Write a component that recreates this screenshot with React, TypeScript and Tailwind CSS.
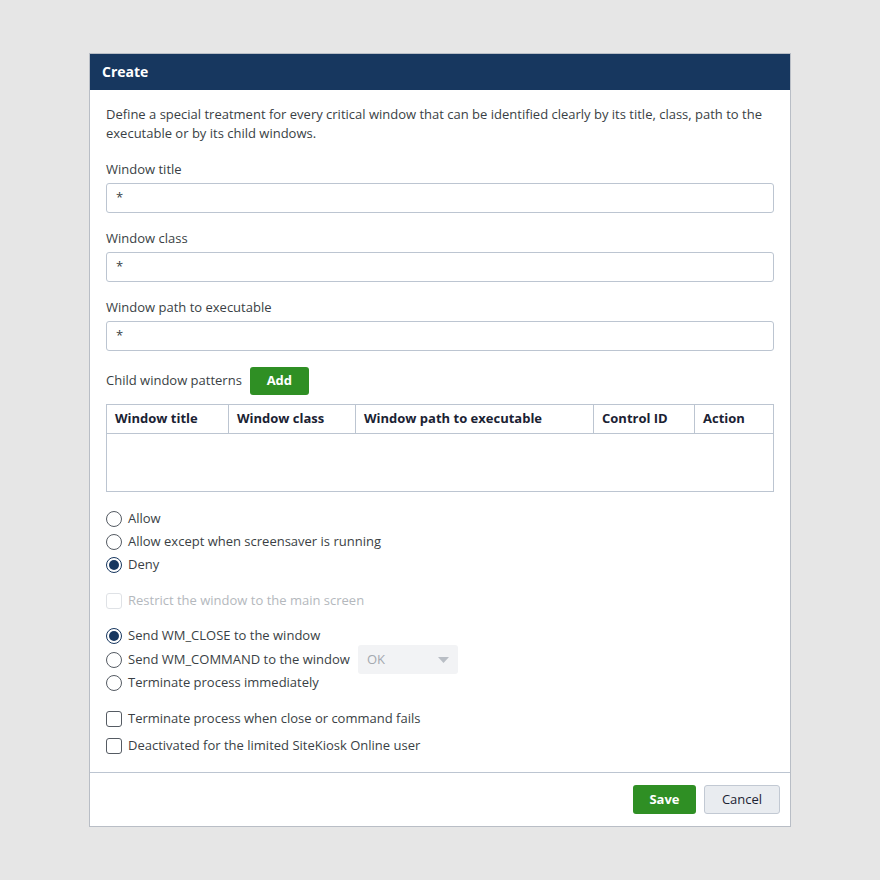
import React from "react"

type Opt = { label: string; checked?: boolean }

const Radio = ({ label, checked }: Opt) => (
  <label className="flex items-center h-[23px] gap-[6px]">
    <span
      className={
        "w-[16px] h-[16px] rounded-full border bg-white flex items-center justify-center " +
        (checked ? "border-[#17375f]" : "border-[#555b63]")
      }
    >
      {checked && <span className="w-[10px] h-[10px] rounded-full bg-[#17375f]" />}
    </span>
    <span>{label}</span>
  </label>
)

const Check = ({ label, disabled }: { label: string; disabled?: boolean }) => (
  <label className={"flex items-center h-[27px] gap-[6px] " + (disabled ? "text-[#b4b8bd]" : "")}>
    <span
      className={
        "w-[16px] h-[16px] rounded-[3px] border bg-white " +
        (disabled ? "border-[#dfe2e6]" : "border-[#555b63]")
      }
    />
    <span>{label}</span>
  </label>
)

const Field = ({ label }: { label: string }) => (
  <div className="flex flex-col">
    <div className="h-[17px] leading-[17px] mb-[5px]">{label}</div>
    <div className="h-[30px] border border-[#bcc5d1] rounded-[3px] px-[9px] flex items-center bg-white">
      *
    </div>
  </div>
)

const cols = [
  { name: "Window title", w: "w-[122px]" },
  { name: "Window class", w: "w-[127px]" },
  { name: "Window path to executable", w: "w-[238px]" },
  { name: "Control ID", w: "w-[101px]" },
  { name: "Action", w: "flex-1" },
]

const App = () => {
  return (
    <div
      className="w-[880px] h-[880px] bg-[#e6e6e6] pt-[53px] text-[13px] text-[#3a3f45]"
      style={{ fontFamily: '"Open Sans", "Liberation Sans", sans-serif' }}
    >
      <div className="ml-[89px] w-[702px] bg-white border border-[#b9bec6]">
        <div className="h-[36px] bg-[#17375f] text-white font-bold text-[14px] flex items-center px-[12px] pb-[2px]">
          Create
        </div>
        <div className="px-[16px] pt-[15px]">
          <p className="leading-[19px] mb-[18px]">
            Define a special treatment for every critical window that can be identified clearly by its title, class, path to the
            executable or by its child windows.
          </p>
          <div className="flex flex-col gap-[17px]">
            <Field label="Window title" />
            <Field label="Window class" />
            <Field label="Window path to executable" />
          </div>
          <div className="flex items-center gap-[8px] mt-[15px] h-[30px]">
            <span>Child window patterns</span>
            <button className="h-[28px] w-[59px] rounded-[3px] bg-[#2f8f24] text-white font-bold">Add</button>
          </div>
          <div className="mt-[8px] border border-[#bcc5d1] h-[88px]">
            <div className="flex h-[29px] border-b border-[#bcc5d1] font-bold text-[#1b2233]">
              {cols.map((c, i) => (
                <div
                  key={c.name}
                  className={
                    c.w +
                    " flex items-center px-[8px] " +
                    (i < cols.length - 1 ? "border-r border-[#bcc5d1]" : "")
                  }
                >
                  {c.name}
                </div>
              ))}
            </div>
          </div>
          <div className="mt-[15px] flex flex-col">
            <Radio label="Allow" />
            <Radio label="Allow except when screensaver is running" />
            <Radio label="Deny" checked />
          </div>
          <div className="mt-[11px]">
            <Check label="Restrict the window to the main screen" disabled />
          </div>
          <div className="mt-[10px] flex flex-col">
            <div className="h-[24px] flex items-center">
              <Radio label="Send WM_CLOSE to the window" checked />
            </div>
            <div className="h-[23px] flex items-center gap-[8px]">
              <Radio label="Send WM_COMMAND to the window" />
              <div className="w-[100px] h-[29px] bg-[#f2f3f5] rounded-[3px] flex items-center justify-between px-[9px] text-[#a4a9b0]">
                <span>OK</span>
                <svg width="11" height="6" viewBox="0 0 11 6">
                  <path d="M0 0 L11 0 L5.5 6 Z" fill="#b9bec5" />
                </svg>
              </div>
            </div>
            <Radio label="Terminate process immediately" />
          </div>
          <div className="mt-[11px] flex flex-col pb-[13px]">
            <Check label="Terminate process when close or command fails" />
            <Check label="Deactivated for the limited SiteKiosk Online user" />
          </div>
        </div>
        <div className="border-t border-[#bcc5d1] h-[54px] flex items-center justify-end gap-[8px] px-[10px]">
          <button className="h-[29px] w-[63px] rounded-[3px] bg-[#2f8f24] text-white font-bold">Save</button>
          <button className="h-[29px] w-[76px] rounded-[3px] bg-[#e9ecf0] border border-[#c2c9d3] text-[#1b2233]">
            Cancel
          </button>
        </div>
      </div>
    </div>
  )
}

export default App
